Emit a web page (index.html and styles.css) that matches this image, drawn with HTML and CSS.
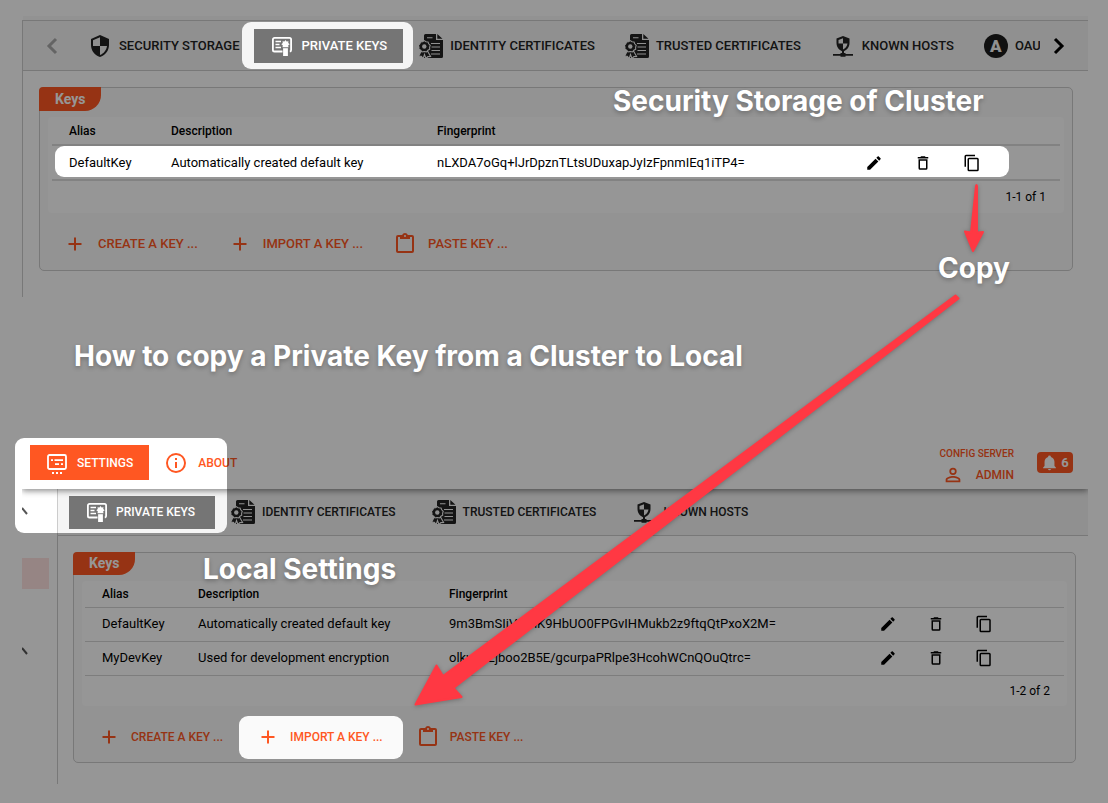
FILE: index.html
```html
<!DOCTYPE html>
<html lang="en">
<head>
<meta charset="utf-8">
<title>How to copy a Private Key from a Cluster to Local</title>
<link rel="stylesheet" href="styles.css">
</head>
<body>
<svg class="sprite" aria-hidden="true">
  <symbol id="i-shield" viewBox="0 0 24 24"><path d="M12 12H19C18.470 16.110 15.720 19.780 12 20.920V12H5V6.300L12 3.190M12 1L3 5V11C3 16.550 6.840 21.730 12 23C17.160 21.730 21 16.550 21 11V5L12 1Z"/></symbol>
  <symbol id="i-key" viewBox="0 0 24 24"><path fill="none" stroke="currentColor" stroke-width="1.8" d="M12.500 17.500H4.500A1.600 1.600 0 0 1 2.900 15.900V5.500A1.600 1.600 0 0 1 4.500 3.900H19.500A1.600 1.600 0 0 1 21.100 5.500V15.900A1.600 1.600 0 0 1 19.800 17.500"/><path fill="none" stroke="currentColor" stroke-width="1.500" d="M5.500 7.500H11M5.500 10.500H9.500M5.500 13.500H11"/><path d="M15.500 6L16.600 7.500L18.500 7.200L18.200 9.100L19.700 10.200L18.200 11.300L18.500 13.200H12.500L12.800 11.300L11.300 10.200L12.800 9.100L12.500 7.200L14.400 7.500Z"/><path d="M13.100 14.200H17.900V22H13.100Z"/></symbol>
  <symbol id="i-cert" viewBox="0 0 24 24"><path d="M6.500 0H17V6H24V22.500A1.500 1.500 0 0 1 22.500 24H5V1.500A1.500 1.500 0 0 1 6.500 0ZM18.300 0L23.500 4.800H18.300Z"/><path fill="none" stroke="#f5f5f5" stroke-width="1.100" d="M8 3.700H13.500M12 9.500H21M12.500 13H21M12.500 16.500H21M12 20H21"/><g stroke="#f5f5f5" stroke-width="1.100"><path d="M2 17.500L-.4 22.200L2.300 22.300L4.200 24.600L5.500 20.500L7 24.600L8.900 22.600L11.600 22.400L8.800 17.500Z"/><path d="M5.300 6.600L7 7.700L9 7.900L9.700 9.800L11.200 11.300L10.600 13.200L10.700 15.300L8.900 16.300L7.500 18L5.300 17.500L3.100 18L1.700 16.300L-.1 15.300L0 13.200L-.6 11.300L.9 9.800L1.600 7.900L3.600 7.700Z"/></g><circle cx="5.300" cy="12.500" r="2.200" fill="#f5f5f5"/></symbol>
  <symbol id="i-host" viewBox="0 0 24 24"><path fill-rule="evenodd" d="M12 2L5.500 4.600V9C5.500 13.100 8.300 16.600 12 17.500C15.700 16.600 18.500 13.100 18.500 9V4.600ZM12 4.300V9.600H16.500C16.100 12.300 14.300 14.800 12 15.600V9.600H7.500V6Z"/><path d="M11 17H13V19H14.500V20H22V21.800H14.500V22.800H9.500V21.800H2V20H9.500V19H11Z"/></symbol>
  <symbol id="i-left" viewBox="0 0 24 24"><path fill="none" stroke="currentColor" stroke-width="3" d="M15 5L8 12L15 19"/></symbol>
  <symbol id="i-right" viewBox="0 0 24 24"><path fill="none" stroke="currentColor" stroke-width="3" d="M8 5L15 12L8 19"/></symbol>
  <symbol id="i-edit" viewBox="0 0 24 24"><path d="M20.710 7.040C21.100 6.650 21.100 6 20.710 5.630L18.370 3.290C18 2.900 17.350 2.900 16.960 3.290L15.120 5.120L18.870 8.870M3 17.250V21H6.750L17.810 9.930L14.060 6.180L3 17.250Z"/></symbol>
  <symbol id="i-trash" viewBox="0 0 24 24"><path d="M6 19A2 2 0 0 0 8 21H16A2 2 0 0 0 18 19V7H6V19M8 9H16V19H8V9M15.500 4L14.500 3H9.500L8.500 4H5V6H19V4H15.500Z"/></symbol>
  <symbol id="i-copy" viewBox="0 0 24 24"><path d="M19 21H8V7H19M19 5H8A2 2 0 0 0 6 7V21A2 2 0 0 0 8 23H19A2 2 0 0 0 21 21V7A2 2 0 0 0 19 5M16 1H4A2 2 0 0 0 2 3V17H4V3H16V1Z"/></symbol>
  <symbol id="i-plus" viewBox="0 0 24 24"><path d="M18.500 13H13V18.500H11V13H5.500V11H11V5.500H13V11H18.500V13Z"/></symbol>
  <symbol id="i-paste" viewBox="0 0 24 24"><path d="M19 3H14.820C14.400 1.840 13.300 1 12 1C10.700 1 9.600 1.840 9.180 3H5A2 2 0 0 0 3 5V19A2 2 0 0 0 5 21H19A2 2 0 0 0 21 19V5A2 2 0 0 0 19 3M12 3A1 1 0 0 1 13 4A1 1 0 0 1 12 5A1 1 0 0 1 11 4A1 1 0 0 1 12 3M7 7H17V5H19V19H5V5H7V7Z"/></symbol>
  <symbol id="i-settings" viewBox="0 0 24 24"><rect x="3" y="4" width="18" height="14" rx="1.500" fill="none" stroke="currentColor" stroke-width="1.800"/><path d="M6 8.300H8V10H6ZM9.500 8.300H18V10H9.500ZM10 12.300H14V14H10ZM16 12.300H18V14H16ZM7 21H9V23H7ZM11 21H13V23H11ZM15 21H17V23H15Z"/></symbol>
  <symbol id="i-info" viewBox="0 0 24 24"><path d="M11 9H13V7H11M12 20C7.590 20 4 16.410 4 12C4 7.590 7.590 4 12 4C16.410 4 20 7.590 20 12C20 16.410 16.410 20 12 20M12 2A10 10 0 0 0 2 12A10 10 0 0 0 12 22A10 10 0 0 0 22 12A10 10 0 0 0 12 2M11 17H13V11H11V17Z"/></symbol>
  <symbol id="i-user" viewBox="0 0 24 24"><path d="M12 13C9.330 13 4 14.330 4 17V20H20V17C20 14.330 14.670 13 12 13M12 4A4 4 0 0 0 8 8A4 4 0 0 0 12 12A4 4 0 0 0 16 8A4 4 0 0 0 12 4M12 14.900C14.970 14.900 18.100 16.360 18.100 17V18.100H5.900V17C5.900 16.360 9 14.900 12 14.900M12 5.900A2.100 2.100 0 0 1 14.100 8A2.100 2.100 0 0 1 12 10.100A2.100 2.100 0 0 1 9.900 8A2.100 2.100 0 0 1 12 5.900Z"/></symbol>
  <symbol id="i-bell" viewBox="0 0 24 24"><path d="M21 19V20H3V19L5 17V11C5 7.900 7.030 5.170 10 4.290V4A2 2 0 0 1 12 2A2 2 0 0 1 14 4V4.290C16.970 5.170 19 7.900 19 11V17L21 19M14 21A2 2 0 0 1 12 23A2 2 0 0 1 10 21"/></symbol>
</svg>

<div class="stage">
  <section class="cluster">
    <nav class="tabs">
      <button class="scroll off" aria-label="Scroll tabs left"><svg><use href="#i-left"/></svg></button>
      <div class="tab-list">
        <button class="tab"><svg><use href="#i-shield"/></svg>SECURITY STORAGE</button>
        <button class="tab active"><svg><use href="#i-key"/></svg>PRIVATE KEYS</button>
        <button class="tab"><svg><use href="#i-cert"/></svg>IDENTITY CERTIFICATES</button>
        <button class="tab"><svg><use href="#i-cert"/></svg>TRUSTED CERTIFICATES</button>
        <button class="tab"><svg><use href="#i-host"/></svg>KNOWN HOSTS</button>
        <button class="tab"><span class="mark">A</span>OAU</button>
      </div>
      <button class="scroll" aria-label="Scroll tabs right"><svg><use href="#i-right"/></svg></button>
    </nav>
    <div class="keys">
      <h2 class="legend">Keys</h2>
      <div class="sheet">
        <table>
          <colgroup><col class="c-alias"><col class="c-desc"><col><col class="c-act"></colgroup>
          <thead><tr><th>Alias</th><th>Description</th><th>Fingerprint</th><td></td></tr></thead>
          <tbody>
            <tr><td>DefaultKey</td><td>Automatically created default key</td><td>nLXDA7oGq+lJrDpznTLtsUDuxapJyIzFpnmIEq1iTP4=</td>
              <td class="acts"><button aria-label="Edit"><svg><use href="#i-edit"/></svg></button><button aria-label="Delete"><svg><use href="#i-trash"/></svg></button><button aria-label="Copy"><svg><use href="#i-copy"/></svg></button></td></tr>
          </tbody>
        </table>
        <p class="pager">1-1 of 1</p>
      </div>
      <div class="buttons">
        <button><svg><use href="#i-plus"/></svg>CREATE A KEY ...</button>
        <button><svg><use href="#i-plus"/></svg>IMPORT A KEY ...</button>
        <button><svg><use href="#i-paste"/></svg>PASTE KEY ...</button>
      </div>
    </div>
  </section>

  <section class="local">
    <header class="appbar">
      <button class="menu current"><svg><use href="#i-settings"/></svg>SETTINGS</button>
      <button class="menu"><svg><use href="#i-info"/></svg>ABOUT</button>
      <div class="account">
        <span class="server">CONFIG SERVER</span>
        <button class="user"><svg><use href="#i-user"/></svg>ADMIN</button>
      </div>
      <button class="alerts" aria-label="6 notifications"><svg><use href="#i-bell"/></svg>6</button>
    </header>
    <div class="body">
      <aside class="side">
        <svg class="tick" viewBox="0 0 6 8"><path d="M0 1L5 7"/></svg>
        <span class="picked"></span>
        <svg class="tick" viewBox="0 0 6 8"><path d="M0 1L5 7"/></svg>
      </aside>
      <div class="main">
        <nav class="tabs">
          <div class="tab-list">
            <button class="tab active"><svg><use href="#i-key"/></svg>PRIVATE KEYS</button>
            <button class="tab"><svg><use href="#i-cert"/></svg>IDENTITY CERTIFICATES</button>
            <button class="tab"><svg><use href="#i-cert"/></svg>TRUSTED CERTIFICATES</button>
            <button class="tab"><svg><use href="#i-host"/></svg>KNOWN HOSTS</button>
          </div>
        </nav>
        <div class="keys">
          <h2 class="legend">Keys</h2>
          <div class="sheet">
            <table>
              <colgroup><col class="c-alias"><col class="c-desc"><col><col class="c-act"></colgroup>
              <thead><tr><th>Alias</th><th>Description</th><th>Fingerprint</th><td></td></tr></thead>
              <tbody>
                <tr><td>DefaultKey</td><td>Automatically created default key</td><td>9m3BmSIiVvxnK9HbUO0FPGvIHMukb2z9ftqQtPxoX2M=</td>
                  <td class="acts"><button aria-label="Edit"><svg><use href="#i-edit"/></svg></button><button aria-label="Delete"><svg><use href="#i-trash"/></svg></button><button aria-label="Copy"><svg><use href="#i-copy"/></svg></button></td></tr>
                <tr><td>MyDevKey</td><td>Used for development encryption</td><td>olkwrnEjboo2B5E/gcurpaPRlpe3HcohWCnQOuQtrc=</td>
                  <td class="acts"><button aria-label="Edit"><svg><use href="#i-edit"/></svg></button><button aria-label="Delete"><svg><use href="#i-trash"/></svg></button><button aria-label="Copy"><svg><use href="#i-copy"/></svg></button></td></tr>
              </tbody>
            </table>
            <p class="pager">1-2 of 2</p>
          </div>
          <div class="buttons">
            <button><svg><use href="#i-plus"/></svg>CREATE A KEY ...</button>
            <button><svg><use href="#i-plus"/></svg>IMPORT A KEY ...</button>
            <button><svg><use href="#i-paste"/></svg>PASTE KEY ...</button>
          </div>
        </div>
      </div>
    </div>
  </section>

  <svg class="overlay" viewBox="0 0 1108 803" preserveAspectRatio="none" aria-hidden="true">
    <mask id="spots">
      <rect width="1108" height="803" fill="#fff"/>
      <rect x="242" y="22" width="171" height="47" rx="9"/>
      <rect x="55" y="146" width="954" height="31" rx="9"/>
      <rect x="15" y="438" width="212" height="95" rx="9"/>
      <rect x="239" y="716" width="164" height="43" rx="9"/>
    </mask>
    <rect width="1108" height="803" fill="#000" fill-opacity=".41" mask="url(#spots)"/>
    <g class="arrows">
      <path d="M976 186Q976.500 184 977 186L977 232.500L983 232L973 251L965 231.500L971 232.500Z"/>
      <path d="M955.500 295.500L958.500 298.500L453.500 688L461.500 697L415.500 704.500L436.500 665.500L443 676Z"/>
    </g>
  </svg>
  <p class="note n-storage">Security Storage of Cluster</p>
  <p class="note n-copy">Copy</p>
  <h1 class="note n-title">How to copy a Private Key from a Cluster to Local</h1>
  <p class="note n-local">Local Settings</p>
</div>
</body>
</html>
```
FILE: styles.css
```css
* { box-sizing: border-box; }
body { margin: 0; background: #fff; color: #000; font: 13px/16px Roboto, "Liberation Sans", sans-serif; }
button { border: 0; margin: 0; padding: 0; background: none; color: inherit; font: inherit; font-weight: 500; white-space: nowrap; cursor: pointer; }
svg { display: block; flex: none; width: 24px; height: 24px; fill: currentColor; }
h1, h2, p { margin: 0; }
.sprite { position: absolute; width: 0; height: 0; }

.stage { position: relative; min-height: 100vh; padding: 16px 20px 0 22px; overflow: hidden; }

.tabs { display: flex; align-items: center; background: #f5f5f5; border-bottom: 1px solid #ccc; }
.tab-list { display: flex; flex: 1; min-width: 0; overflow: hidden; }
.tab { display: flex; flex: none; align-items: center; gap: 7px; height: 34px; padding: 0 14px 0 16px; color: #222; }
.tab.active { background: #757575; color: #fff; }
.mark { width: 24px; height: 24px; border-radius: 50%; background: #1c1c1c; color: #f5f5f5; font: 900 17px/24px Roboto, sans-serif; text-align: center; }
.scroll { flex: none; }
.scroll.off { color: #aaa; }

.keys { border: 1px solid #ccc; border-radius: 5px; background: #fafafa; }
.legend { width: fit-content; background: #ff5722; color: #fff; border-radius: 4px 0 16px 0; font-size: 14px; font-weight: 700; padding: 0 16px; }
.sheet { background: #fff; border-radius: 4px; }
table { width: 100%; border-collapse: collapse; table-layout: fixed; }
th, td { padding: 0 0 0 17px; text-align: left; white-space: nowrap; }
th { font-size: 12px; font-weight: 500; }
tr { border-bottom: 1px solid #d4d4d4; }
td.acts { padding: 0; }
.acts button { display: inline-flex; justify-content: center; vertical-align: middle; align-items: center; }
.acts svg { width: 18px; height: 18px; }
.pager { text-align: right; font-size: 12px; }
.buttons { display: flex; color: #ff5722; }
.buttons button { display: flex; align-items: center; gap: 11px; padding: 0 14px 0 16px; }

.cluster { border-left: 1px solid #ccc; height: 277px; margin-top: 4px; }
.cluster .tabs { height: 51px; border-top: 1px solid #ccc; box-shadow: 0 -4px #f8f8f8; padding: 0 17px 0 18px; }
.cluster .tab-list { margin: 0 7px; }
.cluster .active { gap: 8px; padding-right: 16px; }
.cluster .keys { margin: 16px 15px 0 16px; height: 184px; }
.cluster .legend { line-height: 24px; margin: -1px 0 0 -1px; }
.cluster .sheet { margin: 6px 8px 0; padding: 0 4px; }
.cluster tr { border-bottom: 2px solid #ddd; }
.cluster thead tr { height: 28px; }
.cluster tbody tr { height: 35px; }
.cluster .pager { line-height: 32px; padding-right: 14px; }
.cluster .buttons { padding-left: 7px; height: 61px; }
.cluster .c-alias { width: 102px; }
.cluster .c-desc { width: 266px; }
.cluster .c-act { width: 211px; }
.cluster .acts button { width: 49px; }

.local { margin-top: 133px; }
.appbar { position: relative; display: flex; align-items: center; height: 59px; padding: 6px 15px 0 8px; background: #fff; color: #ff5722; box-shadow: 0 2px 6px rgba(0, 0, 0, .45); clip-path: inset(0 0 -12px 0); }
.menu { display: flex; align-items: center; gap: 8px; height: 35px; padding: 0 16px 0 15px; font-size: 12px; }
.menu.current { background: #ff5722; color: #fff; }
.menu:nth-child(2) { gap: 10px; }
.account { display: flex; flex-direction: column; align-items: flex-end; gap: 2px; margin-left: auto; padding-top: 6px; }
.server { font-size: 10px; font-weight: 500; line-height: 16px; }
.user { display: flex; align-items: center; gap: 12px; height: 22px; font-size: 12px; }
.user svg { width: 22px; height: 22px; }
.alerts { display: flex; align-items: center; justify-content: center; gap: 3px; width: 36px; height: 21px; margin-left: 23px; border-radius: 4px; background: #ff5722; color: #fff; font-weight: 700; }
.alerts svg { width: 17px; height: 17px; }
.body { display: flex; }
.side { display: flex; flex-direction: column; align-items: flex-start; width: 36px; border-right: 1px solid #ccc; padding-top: 18px; height: 295px; color: #444; }
.tick { width: 6px; height: 8px; fill: none; stroke: #555; stroke-width: 2; }
.picked { width: 27px; height: 31px; margin: 43px 0 58px; background: #ffe3e0; }
.main { flex: 1; min-width: 0; }
.local .tabs { height: 47px; padding-left: 11px; }
.local .tab { height: 33px; padding-right: 20px; font-size: 12px; }
.local .keys { margin: 16px 12px 0 15px; height: 211px; }
.local .legend { line-height: 23px; margin: -1px 0 0 -1px; }
.local .sheet { margin: 6px 8px 0; padding: 0 3px; }
.local thead tr { height: 26px; }
.local tbody tr { height: 34px; }
.local .pager { line-height: 30px; padding-right: 14px; }
.local .buttons { padding-left: 7px; height: 62px; }
.local .buttons button { gap: 10px; padding-right: 17px; font-size: 12px; }
.local .c-alias { width: 96px; }
.local .c-desc { width: 251px; }
.local .c-act { width: 200px; }
.local .acts button { width: 48px; }

.overlay { position: absolute; inset: 0; width: 100%; height: 100%; pointer-events: none; }
.arrows { fill: #ff3843; stroke: #ff3843; stroke-width: 2; stroke-linejoin: round; filter: drop-shadow(0 1px 2px rgba(0, 0, 0, .25)); }
.note { position: absolute; color: #fff; font: 700 28px/36px Inter, sans-serif; white-space: nowrap; text-shadow: 0 2px 4px rgba(0, 0, 0, .25); }
.n-storage { left: 613px; top: 83px; }
.n-copy { left: 938px; top: 250px; }
.n-title { left: 74px; top: 338px; }
.n-local { left: 203px; top: 551px; }
```
